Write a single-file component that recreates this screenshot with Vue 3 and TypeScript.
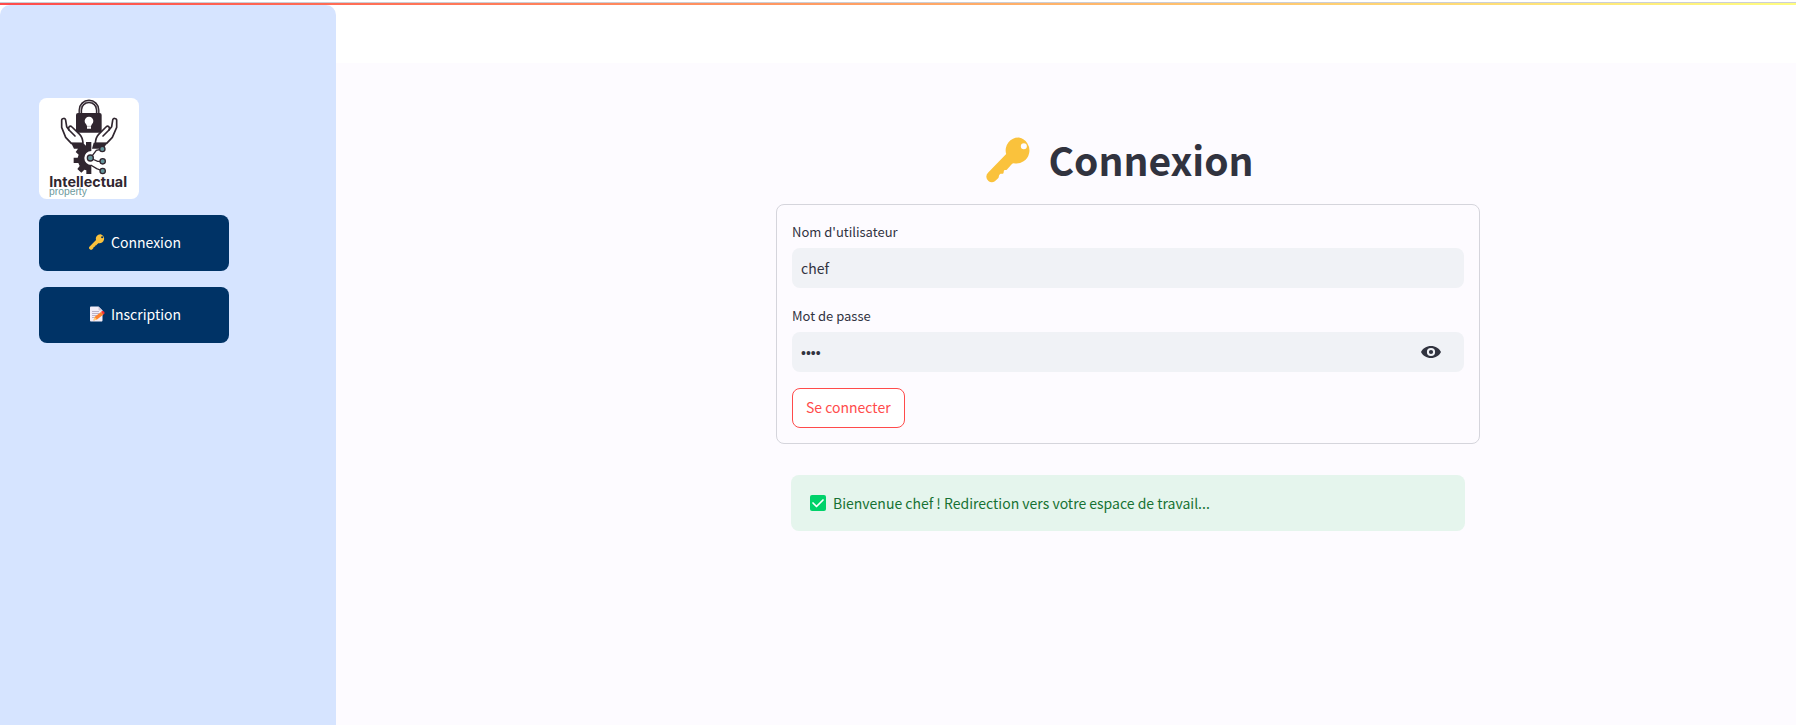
<script setup lang="ts">
import { ref } from 'vue'

const username = ref<string>('chef')
const password = ref<string>('chef')
const showPassword = ref<boolean>(false)
const message = ref<string>('Bienvenue chef ! Redirection vers votre espace de travail...')

function submit(): void {
  message.value = `Bienvenue ${username.value} ! Redirection vers votre espace de travail...`
}
</script>

<template>
  <div class="app">
    <svg class="symbols" aria-hidden="true">
      <symbol id="key" viewBox="0 0 44 44">
        <path
          fill="#fac23c"
          fill-rule="evenodd"
          d="M31.5 0.5a12.3 12.3 0 0 0-12.2 15.8L1.9 34.2a5.2 5.2 0 0 0 .4 7.8 5 5 0 0 0 7-.3l2.5-2.5c.8-.8.2-2.2.9-2.9l.8-.8c.9-.8 2.2.2 3-.6.9-.9.1-2.200.9-3s2-.1 2.700-.9l3-3.200c1.200-1.200 1.900-2.800 3.400-2.700A12.300 12.300 0 1 0 31.500 .5zM36.200 6a2.900 2.900 0 1 1 0 5.800 2.900 2.900 0 0 1 0-5.800z"
        />
      </symbol>
    </svg>

    <div class="decoration"></div>

    <div class="shell">
      <aside class="sidebar">
        <svg class="logo" viewBox="27 24 300 303" role="img" aria-label="Intellectual property">
          <rect x="27" y="24" width="300" height="303" rx="23" fill="#fff" />
          <path d="M151 72V60a26 26 0 0 1 52 0v12" fill="none" stroke="#30262f" stroke-width="11" />
          <path d="M151 72V60a26 26 0 0 1 52 0v12" fill="none" stroke="#b9b5b9" stroke-width="3" />
          <rect x="138" y="69" width="77" height="59" rx="6" fill="#30262f" />
          <circle cx="177" cy="93" r="13" fill="#fff" />
          <path d="M168 100h18l-3 9v7h-12v-7z" fill="#fff" />
          <path d="M171 109h12" stroke="#30262f" stroke-width="1" />
          <g fill="#fff" stroke="#30262f" stroke-width="5" stroke-linejoin="round" stroke-linecap="round">
            <path d="M124 160l-17-18-12-30V91c0-7 12-8 12 0l3 19 7 10c-4-9 3-15 9-9l23 22c7 7 9 15 10 26z" />
            <path d="M230 160l17-18 13-30V91c0-7-12-8-12 0l-3 19-8 10c4-9-3-15-9-9l-22 22c-7 7-9 15-10 26z" />
            <path d="M117 120l18 18M237 120l-18 18" fill="none" />
          </g>
          <path
            d="M123 158l36 1 9 8v-11h16v27a21 21 0 0 0 0 42v27h-15v-11l-6-2-9 9-12-11 7-9-4-9h-14v-16h12l3-9-9-8 7-10h-12z"
            fill="#30262f"
          />
          <path d="M191 158h41l-12 18h-34z" fill="#30262f" />
          <g fill="none" stroke="#30262f" stroke-width="4">
            <path d="M187 197l12-16 18-4M187 207l16 7h15M182 225l18 11 18 7" />
          </g>
          <g fill="#64959b" stroke="#30262f" stroke-width="4">
            <circle cx="181" cy="204" r="9" />
            <circle cx="217" cy="177" r="8" />
            <circle cx="218" cy="214" r="8" />
            <circle cx="218" cy="243" r="8" />
          </g>
          <text class="logo-name" x="58" y="291">Intellectual</text>
          <text class="logo-sub" x="57" y="315">property</text>
        </svg>

        <button type="button" class="nav">
          <svg class="emoji"><use href="#key" /></svg>
          <span>Connexion</span>
        </button>
        <button type="button" class="nav">
          <svg class="emoji" viewBox="0 0 32 32">
            <path d="M2 3c0-1 1-2 2-2h15l8 8v20c0 1-1 2-2 2H4c-1 0-2-1-2-2z" fill="#f3eef8" />
            <path d="M19 1l8 8h-6c-1 0-2-1-2-2z" fill="#cdc4d6" />
            <path d="M6 11h14M6 15h14M6 19h10M6 23h6" stroke="#a99db8" stroke-width="1.500" />
            <path d="M9 29l2-7 13-10 5 5-13 10z" fill="#ff822d" />
            <path d="M9 29l2-7 5 5z" fill="#ffce7c" />
            <path d="M24 12l2-2c3-1 6 2 5 5l-2 2z" fill="#f8312f" />
          </svg>
          <span>Inscription</span>
        </button>
      </aside>

      <div class="page">
        <header class="topbar"></header>
        <main class="content">
          <h1 class="title">
            <svg class="title-key" aria-hidden="true"><use href="#key" /></svg>
            <span>Connexion</span>
          </h1>

          <form class="form" @submit.prevent="submit">
            <div class="field">
              <label for="username">Nom d'utilisateur</label>
              <div class="box">
                <input id="username" v-model="username" type="text" autocomplete="off" />
              </div>
            </div>
            <div class="field">
              <label for="password">Mot de passe</label>
              <div class="box">
                <input
                  id="password"
                  v-model="password"
                  class="secret"
                  :type="showPassword ? 'text' : 'password'"
                  autocomplete="off"
                />
                <button
                  type="button"
                  class="eye"
                  aria-label="Afficher le mot de passe"
                  @click="showPassword = !showPassword"
                >
                  <svg viewBox="0 0 20 12">
                    <path
                      fill="#31333f"
                      fill-rule="evenodd"
                      d="M10 0C5.500 0 1.700 2.500 0 6c1.700 3.500 5.500 6 10 6s8.300-2.500 10-6c-1.700-3.500-5.500-6-10-6zM10 1.900a4.100 4.100 0 1 1 0 8.200 4.100 4.100 0 0 1 0-8.200zM10 3.900a2.100 2.100 0 1 0 0 4.200 2.100 2.100 0 0 0 0-4.200z"
                    />
                  </svg>
                </button>
              </div>
            </div>
            <button type="submit" class="submit">Se connecter</button>
          </form>

          <div class="alert" role="alert">
            <svg class="check" viewBox="0 0 16 16" aria-hidden="true">
              <rect width="16" height="16" rx="2" fill="#00d26a" />
              <path d="M3 8l3.500 3.500L13 5" fill="none" stroke="#fff" stroke-width="1.700" stroke-linecap="round" stroke-linejoin="round" />
            </svg>
            <span>{{ message }}</span>
          </div>
        </main>
      </div>
    </div>
  </div>
</template>

<style>
body {
  margin: 0;
  background: #fff;
}
</style>

<style scoped>
.app {
  display: flex;
  flex-direction: column;
  min-height: 100vh;
  box-sizing: border-box;
  padding-top: 2px;
  font-family: 'Noto Sans CJK SC', 'Noto Sans', sans-serif;
  font-size: 14px;
  line-height: 24px;
  color: #31333f;
}

.symbols {
  position: absolute;
  width: 0;
  height: 0;
}

.decoration {
  height: 2px;
  border-top: 1px solid #cbced6;
  background: linear-gradient(90deg, #ff4b4b, #fffd80);
}

.shell {
  flex: 1;
  display: flex;
}

.sidebar {
  width: 336px;
  flex: none;
  box-sizing: border-box;
  padding: 93px 39px 24px;
  display: flex;
  flex-direction: column;
  align-items: flex-start;
  gap: 16px;
  background: #d6e4ff;
  border-radius: 10px 10px 0 0;
}

.logo {
  width: 100px;
  height: 101px;
}

.logo-name {
  font-family: Inter, sans-serif;
  font-weight: 700;
  font-size: 43px;
  fill: #30262f;
}

.logo-sub {
  font-family: 'Liberation Sans', sans-serif;
  font-size: 31px;
  fill: #6c999c;
}

button,
input {
  font: inherit;
  color: inherit;
}

.nav {
  width: 190px;
  height: 56px;
  display: flex;
  align-items: center;
  justify-content: center;
  gap: 6px;
  padding: 0 0 2px 2px;
  border: 0;
  border-radius: 8px;
  background: #003366;
  color: #fff;
  font-weight: 400;
  cursor: pointer;
}

.emoji {
  width: 16px;
  height: 16px;
}

.page {
  flex: 1;
  min-width: 0;
  display: flex;
  flex-direction: column;
}

.topbar {
  height: 58px;
  background: #fff;
}

.content {
  flex: 1;
  display: grid;
  grid-template-columns: 440fr minmax(auto, 704px) 316fr;
  align-content: start;
  padding-top: 64px;
  background: #fdfbff;
}

.content > * {
  grid-column: 2;
}

.title {
  display: flex;
  align-items: center;
  justify-content: center;
  gap: 16px;
  margin: 0;
  padding: 6px 16px 18px 0;
  font-size: 39px;
  font-weight: 700;
  line-height: 53px;
}

.title-key {
  width: 46px;
  height: 46px;
}

.form {
  display: flex;
  flex-direction: column;
  align-items: stretch;
  gap: 16px;
  padding: 15px;
  border: 1px solid #d5d5dc;
  border-radius: 8px;
}

.field {
  display: flex;
  flex-direction: column;
  gap: 4px;
}

.field label {
  font-size: 13px;
}

.box {
  display: flex;
  align-items: center;
  height: 40px;
  border-radius: 8px;
  background: #f0f2f6;
}

.box input {
  flex: 1;
  min-width: 0;
  box-sizing: border-box;
  height: 40px;
  padding: 0 9px;
  border: 0;
  outline: 0;
  background: transparent;
}

.box .secret {
  padding-top: 2px;
  font-family: 'Liberation Sans', sans-serif;
}

.eye {
  display: flex;
  padding: 12px 23px;
  border: 0;
  background: transparent;
  cursor: pointer;
}

.eye svg {
  width: 20px;
  height: 12px;
}

.submit {
  align-self: flex-start;
  height: 40px;
  padding: 0 13px 2px;
  border: 1px solid #ff4b4b;
  border-radius: 8px;
  background: #fff;
  color: #ff4b4b;
  cursor: pointer;
}

.alert {
  display: flex;
  align-items: center;
  gap: 7px;
  margin: 31px 15px 0;
  padding: 16px 19px;
  border-radius: 8px;
  background: #e5f5ed;
  color: #177233;
}

.check {
  width: 16px;
  height: 16px;
}
</style>
